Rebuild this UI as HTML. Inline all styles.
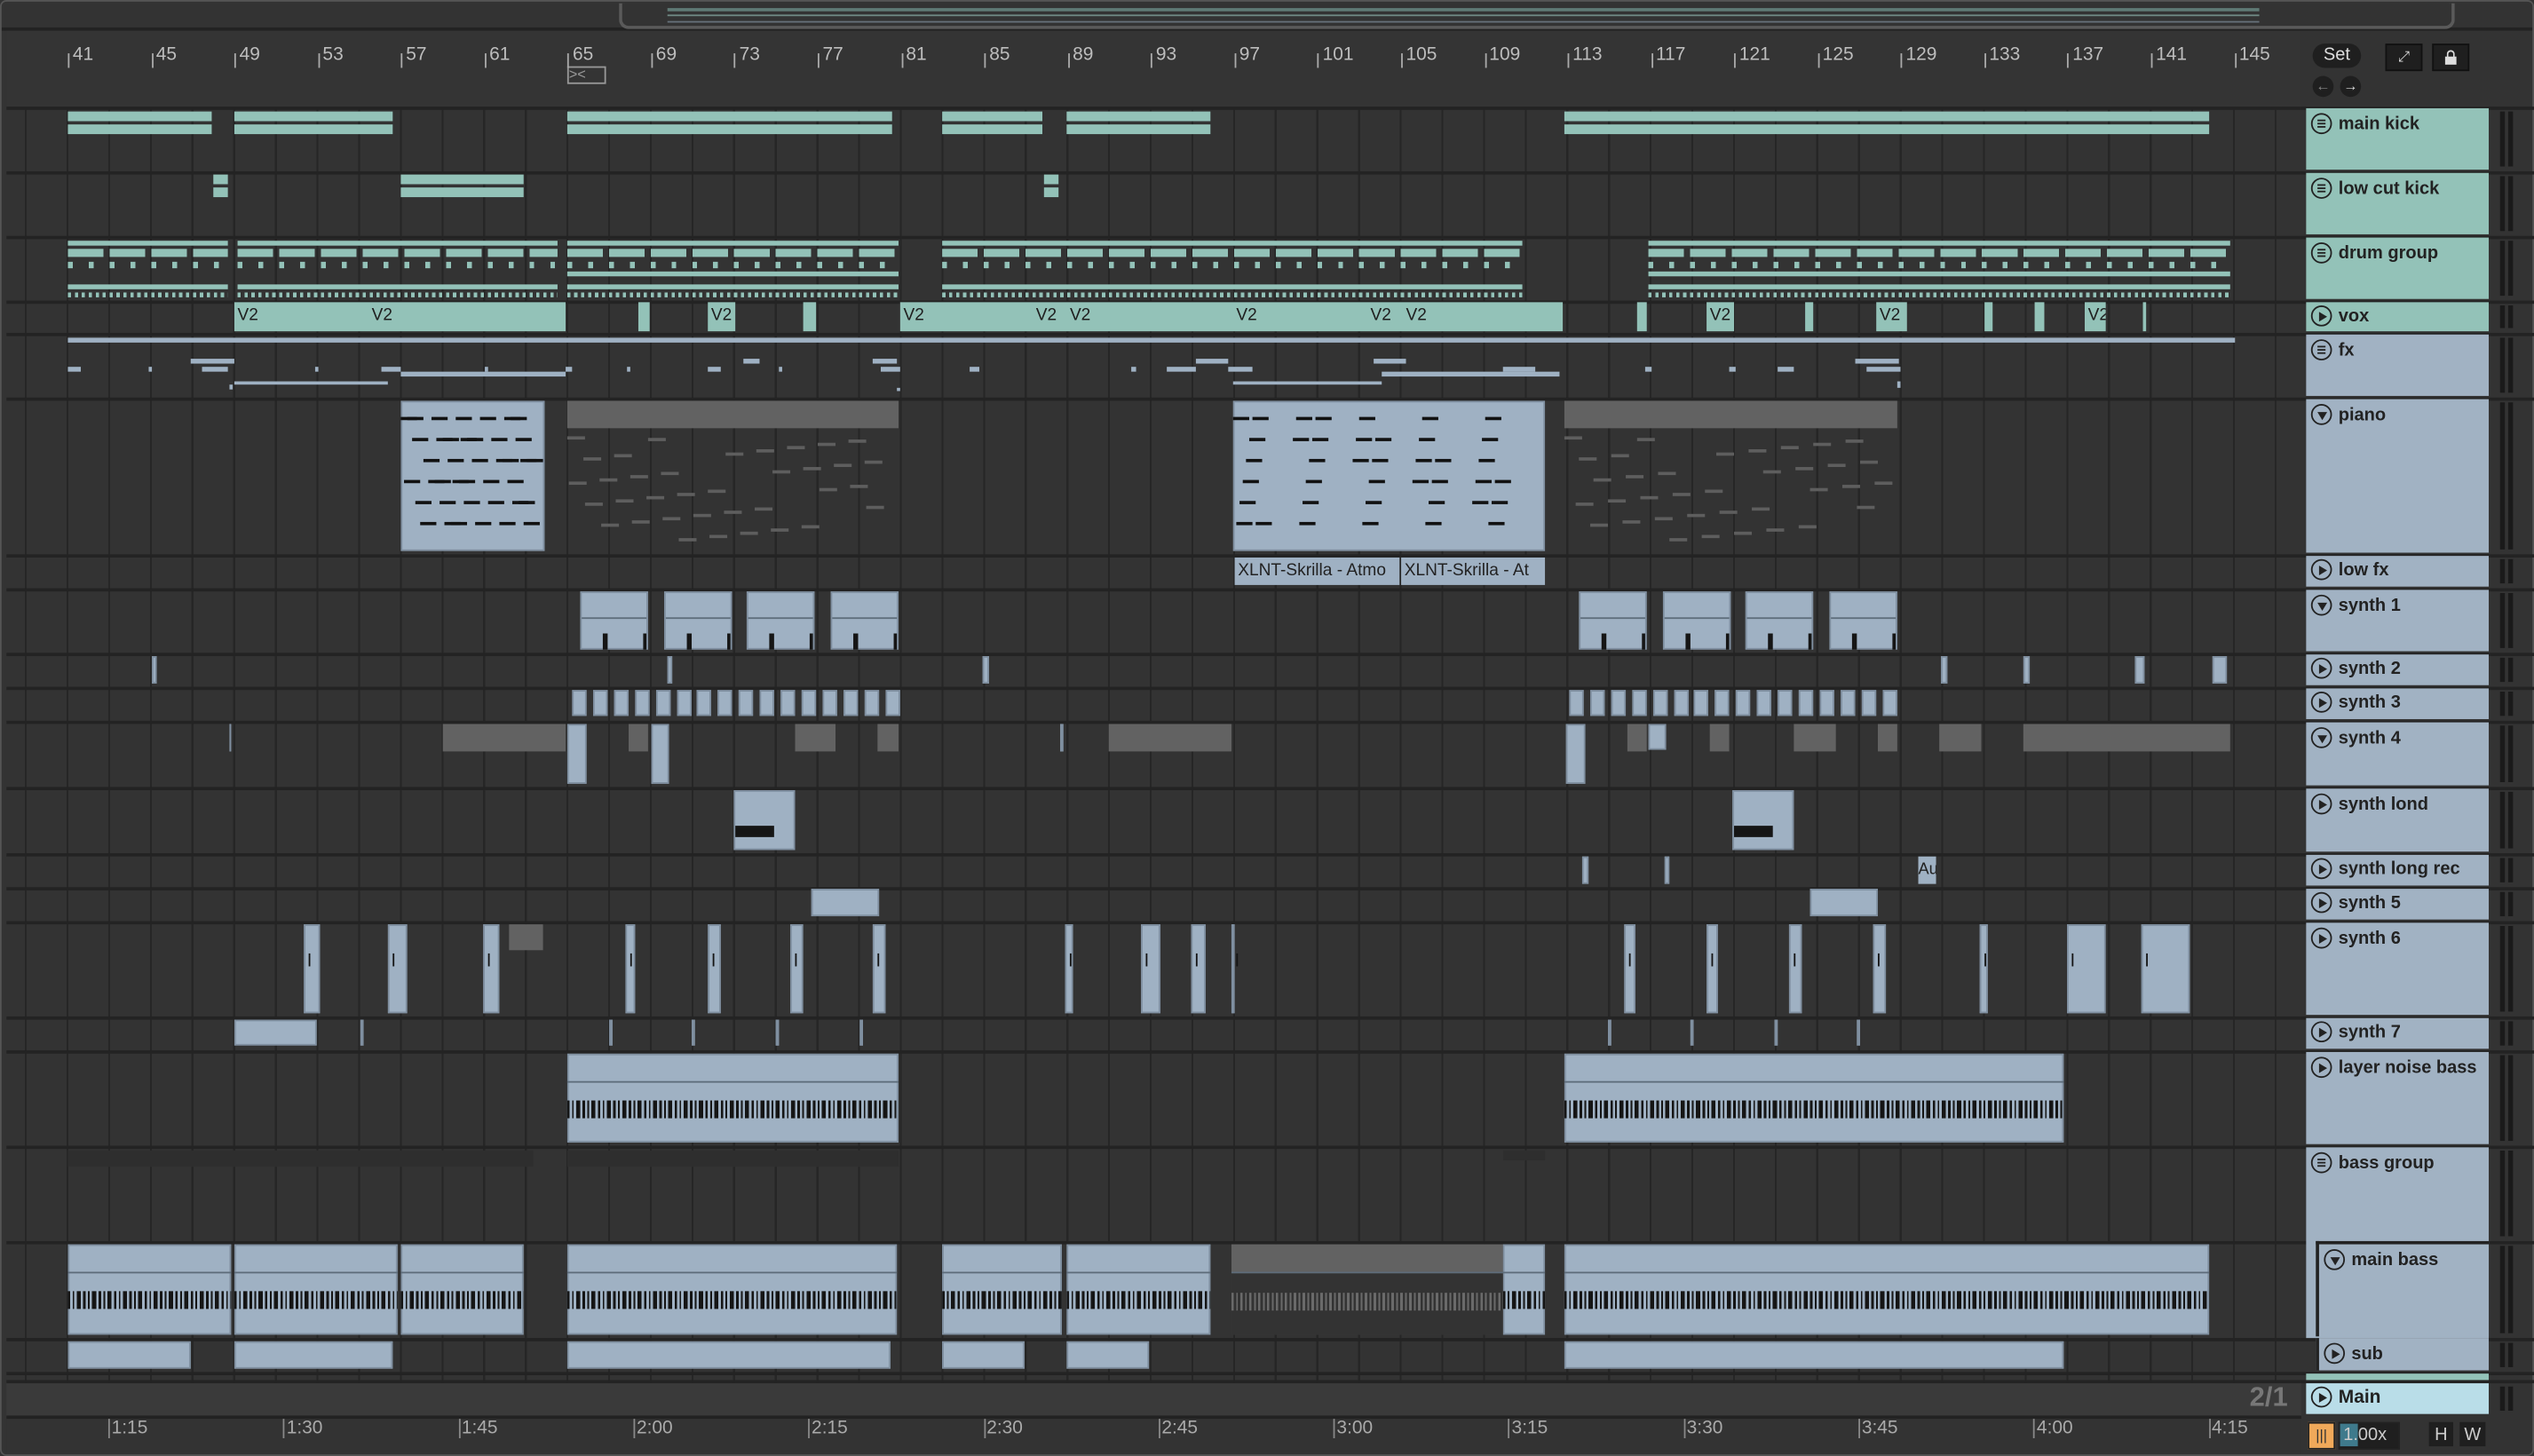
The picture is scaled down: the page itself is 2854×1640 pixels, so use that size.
<!DOCTYPE html>
<html><head><meta charset="utf-8"><style>
html,body{margin:0;padding:0;background:#1f1f1f;overflow:hidden}
#root{position:absolute;left:0;top:0;width:1568px;height:901px;transform-origin:0 0;transform:scale(1.82015,1.82020);background:#333;font-family:"Liberation Sans",sans-serif;overflow:hidden}
.a{position:absolute}
.grid{position:absolute;left:4px;top:67px;width:1420px;height:809px;background-image:repeating-linear-gradient(90deg,transparent 0,transparent 11.4px,#262626 11.4px,#262626 12.6px,transparent 12.6px,transparent 25.78px)}
.sep{position:absolute;left:4px;width:1420px;height:2px;background:#232323}
.hd{position:absolute;left:1427px;width:113px;color:#222;font-size:11px;font-weight:bold;font-family:"Liberation Sans",sans-serif;white-space:nowrap}
.hd span{position:absolute;left:20px;top:4px}
.ic{position:absolute;left:3px;top:3px;width:11px;height:11px;border:1.3px solid #222;border-radius:50%}
.ic.ig:before{content:"";position:absolute;left:3px;top:3px;width:5px;height:5px;border-top:1px solid #222;border-bottom:1px solid #222;box-sizing:border-box}
.ic.ig:after{content:"";position:absolute;left:3px;top:5px;width:5px;height:1px;background:#222}
.ic.ip:before{content:"";position:absolute;left:4px;top:2.5px;border-left:5px solid #222;border-top:3px solid transparent;border-bottom:3px solid transparent}
.ic.id:before{content:"";position:absolute;left:2.5px;top:4px;border-top:5px solid #222;border-left:3px solid transparent;border-right:3px solid transparent}
.mt{position:absolute;left:1547px;width:8px}
.mt:before,.mt:after{content:"";position:absolute;top:2px;bottom:2px;width:3px;background:#1a1a1a}
.mt:before{left:0}.mt:after{left:5px}
.t{position:absolute;background:#93c2b8}
.b{position:absolute;background:#9fb1c3;box-shadow:inset 0 0 0 1px #7f8fa0}
.g{position:absolute;background:#626262}
.rl{position:absolute;top:28px;color:#bdbdbd;font-size:11.5px}
.tl{position:absolute;top:878px;color:#aaa;font-size:11.5px}
.v{position:absolute;top:189px;font-size:10.5px;color:#1e1e1e}
</style></head><body><div id="root">
<div class="a" style="left:0;top:0;width:1568px;height:17px;background:#333;border-bottom:2px solid #222"></div>
<div class="a" style="left:383px;top:2px;width:1132px;height:14px;border:2px solid #5a5a5a;border-top:none;border-radius:0 0 6px 6px"></div>
<div class="a" style="left:413px;top:5px;width:985px;height:2px;background:#5f7a75"></div>
<div class="a" style="left:413px;top:9px;width:985px;height:1px;background:#6f8984"></div>
<div class="a" style="left:413px;top:13px;width:985px;height:1px;background:#66707a"></div>
<div class="a" style="left:4px;top:19px;width:1420px;height:48px;background:#343434"></div>
<div id="ruler"></div>
<div class="a" style="left:351px;top:41px;width:24px;height:11px;border:1px solid #999;box-sizing:border-box"></div>
<div class="a" style="left:352px;top:42px;font-size:9px;color:#999;line-height:9px">&gt;&lt;</div>
<div class="grid"></div>
<div id="seps"></div>
<div id="clips"></div>
<div class="a" style="left:4px;top:855px;width:1420px;height:21px;background:#3a3a3a"></div>
<div class="a" style="left:1392px;top:855px;color:#777;font-size:17px;font-weight:bold">2/1</div>
<div class="a" style="left:4px;top:876px;width:1420px;height:25px;background:#333;border-top:2px solid #222"></div>
<div id="tl"></div>
<div class="a" style="left:1424px;top:19px;width:144px;height:48px;background:#333"></div>
<div class="a" style="left:1431px;top:27px;width:30px;height:15px;background:#1f1f1f;border-radius:8px;color:#ddd;font-size:11px;text-align:center;line-height:15px">Set</div>
<div class="a" style="left:1476px;top:27px;width:21px;height:15px;background:#1f1f1f;border:1px solid #111;color:#ddd;font-size:9px;text-align:center;line-height:15px">⤢</div>
<div class="a" style="left:1505px;top:27px;width:21px;height:15px;background:#1f1f1f;border:1px solid #111"><div class="a" style="left:7px;top:7px;width:7px;height:5px;background:#ddd"></div><div class="a" style="left:8px;top:3px;width:3px;height:4px;border:1px solid #ddd;border-bottom:none;border-radius:3px 3px 0 0"></div></div>
<div class="a" style="left:1431px;top:47px;width:13px;height:13px;background:#1f1f1f;border-radius:50%;color:#888;font-size:9px;text-align:center;line-height:13px">←</div>
<div class="a" style="left:1448px;top:47px;width:13px;height:13px;background:#1f1f1f;border-radius:50%;color:#ddd;font-size:9px;text-align:center;line-height:13px">→</div>
<div id="hdrs"></div>
<div class="a" style="left:1428px;top:880px;width:15px;height:15px;background:#f0a95a;border:1px solid #222;color:#333;font-size:9px;text-align:center;line-height:15px">|||</div>
<div class="a" style="left:1447px;top:880px;width:36px;height:15px;background:#1f1f1f;border:1px solid #222"></div>
<div class="a" style="left:1448px;top:881px;width:11px;height:14px;background:#3f7a8c"></div>
<div class="a" style="left:1450px;top:880px;color:#ccc;font-size:11px;line-height:16px">1.00x</div>
<div class="a" style="left:1503px;top:880px;width:15px;height:15px;background:#1f1f1f;color:#ccc;font-size:11px;text-align:center;line-height:16px">H</div>
<div class="a" style="left:1522px;top:880px;width:16px;height:15px;background:#1f1f1f;color:#ccc;font-size:11px;text-align:center;line-height:16px">W</div>
<div class="a" style="left:0;top:0;width:1566px;height:899px;border:1px solid #555;border-radius:4px;pointer-events:none"></div>
<div class="a" style="left:764px;top:344px;width:102px;height:18px;background:#9fb1c3;color:#222;font-size:10.5px;line-height:18px;overflow:hidden;white-space:nowrap;padding-left:2px;box-sizing:border-box">XLNT-Skrilla - Atmo</div>
<div class="a" style="left:867px;top:344px;width:89px;height:18px;background:#9fb1c3;color:#222;font-size:10.5px;line-height:18px;overflow:hidden;white-space:nowrap;padding-left:2px;box-sizing:border-box">XLNT-Skrilla - At</div>
<div id="v2"></div>
<div class="a" style="left:1187px;top:530px;width:11px;height:17px;background:#9fb1c3;color:#222;font-size:10px;line-height:17px;overflow:hidden">Au</div>
<div class="hd" style="top:67px;height:38px;background:#93c2b8"><div class="ic ig"></div><span>main kick</span></div>
<div class="hd" style="top:107px;height:38px;background:#93c2b8"><div class="ic ig"></div><span>low cut kick</span></div>
<div class="hd" style="top:147px;height:38px;background:#93c2b8"><div class="ic ig"></div><span>drum group</span></div>
<div class="hd" style="top:187px;height:18px;background:#93c2b8"><div class="ic ip" style="top:2px"></div><span style="top:3px">vox</span></div>
<div class="hd" style="top:207px;height:38px;background:#a1b2c3"><div class="ic ig"></div><span>fx</span></div>
<div class="hd" style="top:247px;height:95px;background:#a1b2c3"><div class="ic id"></div><span>piano</span></div>
<div class="hd" style="top:344px;height:19px;background:#a1b2c3"><div class="ic ip" style="top:2px"></div><span style="top:3px">low fx</span></div>
<div class="hd" style="top:365px;height:38px;background:#a1b2c3"><div class="ic id"></div><span>synth 1</span></div>
<div class="hd" style="top:405px;height:19px;background:#a1b2c3"><div class="ic ip" style="top:2px"></div><span style="top:3px">synth 2</span></div>
<div class="hd" style="top:426px;height:19px;background:#a1b2c3"><div class="ic ip" style="top:2px"></div><span style="top:3px">synth 3</span></div>
<div class="hd" style="top:447px;height:39px;background:#a1b2c3"><div class="ic id"></div><span>synth 4</span></div>
<div class="hd" style="top:488px;height:39px;background:#a1b2c3"><div class="ic ip"></div><span>synth lond</span></div>
<div class="hd" style="top:529px;height:19px;background:#a1b2c3"><div class="ic ip" style="top:2px"></div><span style="top:3px">synth long rec</span></div>
<div class="hd" style="top:550px;height:19px;background:#a1b2c3"><div class="ic ip" style="top:2px"></div><span style="top:3px">synth 5</span></div>
<div class="hd" style="top:571px;height:57px;background:#a1b2c3"><div class="ic ip"></div><span>synth 6</span></div>
<div class="hd" style="top:630px;height:19px;background:#a1b2c3"><div class="ic ip" style="top:2px"></div><span style="top:3px">synth 7</span></div>
<div class="hd" style="top:651px;height:57px;background:#a1b2c3"><div class="ic ip"></div><span>layer noise bass</span></div>
<div class="hd" style="top:710px;height:118px;background:#a1b2c3"><div class="ic ig"></div><span>bass group</span></div>
<div class="hd" style="left:1433px;width:107px;top:768px;height:59px;background:#a1b2c3;border-left:2px solid #222;border-top:2px solid #222;box-sizing:border-box"><div class="ic id"></div><span>main bass</span></div>
<div class="hd" style="left:1433px;width:107px;top:828px;height:20px;background:#a1b2c3;border-left:2px solid #222;box-sizing:border-box"><div class="ic ip" style="top:3px"></div><span style="top:4px">sub</span></div>
<div class="hd" style="top:850px;height:4px;background:#93c2b8"></div>
<div class="hd" style="top:856px;height:19px;background:#b9dde8;font-size:11.5px"><div class="ic ip" style="top:2px"></div><span style="top:3px">Main</span></div>
<script>
var R=document.getElementById('root');
function el(c,x1,x2,y1,y2,st){var d=document.createElement('div');d.className=c;d.style.cssText='left:'+x1+'px;width:'+(x2-x1)+'px;top:'+y1+'px;height:'+(y2-y1)+'px;'+(st||'');R.insertBefore(d,document.getElementById('v2'));return d;}
for(var i=0;i<27;i++){var b=41+i*4,x=42+(b-41)*12.89;
el('a',x,x+1,33,42,'background:#aaa');var s=document.createElement('div');s.className='rl';s.style.left=(x+3)+'px';s.textContent=b;R.insertBefore(s,document.getElementById('ruler'));}
var tls=['1:15','1:30','1:45','2:00','2:15','2:30','2:45','3:00','3:15','3:30','3:45','4:00','4:15'];
tls.forEach(function(t,i){var x=67+i*108.3;el('a',x,x+1,878,890,'background:#888');var s=document.createElement('div');s.className='tl';s.style.left=(x+2)+'px';s.textContent=t;R.insertBefore(s,document.getElementById('tl'));});
[66,106,146,186,206,246,343,364,404,425,446,487,528,549,570,629,650,709,768,828,849,854].forEach(function(y){el('sep',4,1424,y,y+2);el('a',1424,1568,y,y+2,'background:#232323')});
[[67,105],[107,145],[147,185],[187,205],[207,245],[247,342],[344,363],[365,403],[405,424],[426,445],[447,486],[488,527],[529,548],[550,569],[571,628],[630,649],[651,708],[710,767],[769,827],[829,848],[856,875]].forEach(function(r){el('mt',1547,1555,r[0],r[1])});
function T(x1,x2,y1,y2){el('t',x1,x2,y1,y2)}
function B(x1,x2,y1,y2){return el('b',x1,x2,y1,y2)}
function G(x1,x2,y1,y2){el('g',x1,x2,y1,y2)}
[[42,131],[145,243],[351,552],[583,645],[660,749],[968,1367]].forEach(function(c){T(c[0],c[1],69,75);T(c[0],c[1],77,83)});
[[132,141],[248,324],[646,655]].forEach(function(c){T(c[0],c[1],108,114);T(c[0],c[1],116,122)});
[[42,141],[147,345],[351,556],[583,942],[1020,1380]].forEach(function(c){
T(c[0],c[1],149,152);el('a',c[0],c[1],154,159,'background:repeating-linear-gradient(90deg,#93c2b8 0,#93c2b8 22px,transparent 22px,transparent 25.8px)');
el('a',c[0],c[1],162,166,'background:repeating-linear-gradient(90deg,#93c2b8 0,#93c2b8 3px,transparent 3px,transparent 12.9px)');
T(c[0],c[1],176,179);el('a',c[0],c[1],181,184,'background:repeating-linear-gradient(90deg,#93c2b8 0,#93c2b8 2px,transparent 2px,transparent 4.3px)');});
[[351,556],[1020,1380]].forEach(function(c){T(c[0],c[1],168,171)});
[[145,350],[395,402],[438,455],[497,505],[557,967],[1013,1019],[1056,1073],[1117,1122],[1161,1180],[1228,1233],[1259,1265],[1290,1303],[1326,1328]].forEach(function(c){T(c[0],c[1],187,205)});
el('a',42,1383,209,212,'background:#9fb1c3');
[[42,50,227,230],[92,94,227,230],[118,145,222,225],[125,141,227,230],[142,144,238,241],[145,240,236,238],[195,197,227,230],[236,248,227,230],[248,350,230,233],[300,302,227,230],[350,354,227,230],[388,390,227,230],[438,446,227,230],[460,470,222,225],[482,484,227,230],[540,555,222,225],[545,557,227,230],[555,557,240,242],[600,606,227,230],[700,703,227,230],[722,740,227,230],[740,760,222,225],[760,775,227,230],[763,855,236,238],[850,870,222,225],[855,965,230,233],[930,950,227,230],[1018,1022,227,230],[1070,1074,227,230],[1100,1110,227,230],[1148,1175,222,225],[1155,1176,227,230],[1174,1176,236,240]].forEach(function(c){el('a',c[0],c[1],c[2],c[3],'background:#9fb1c3')});
function notesBlack(x1,x2){var d=B(x1,x2,248,341);for(var i=0;i<40;i++){var nx=x1+((i*37)%(x2-x1-10)),ny=258+((i*13)%78);var n=document.createElement('div');n.className='a';n.style.cssText='left:'+(nx-x1)+'px;top:'+(ny-248)+'px;width:10px;height:2px;background:#111';d.appendChild(n);}}
notesBlack(248,337);notesBlack(763,956);
function notesGray(x1,x2){G(x1,x2,248,265);for(var i=0;i<36;i++){var nx=x1+((i*29)%(x2-x1-12)),ny=270+((i*11)%64);el('a',nx,nx+11,ny,ny+2,'background:#5e5e5e')}}
notesGray(351,556);notesGray(968,1174);
[359,411,462,514,977,1029,1080,1132].forEach(function(x){var d=B(x,x+42,366,402);d.style.backgroundImage='linear-gradient(#5d6c7a,#5d6c7a)';d.style.backgroundSize='100% 1px';d.style.backgroundPosition='0 16px';d.style.backgroundRepeat='no-repeat';el('a',x+14,x+17,392,402,'background:#151515');el('a',x+39,x+41,392,402,'background:#151515')});
[[94,97],[413,416],[608,612],[1201,1205],[1252,1256],[1321,1327],[1369,1378]].forEach(function(c){B(c[0],c[1],406,423)});
[[354,556],[971,1175]].forEach(function(c){for(var x=c[0];x<c[1]-6;x+=12.9){B(x,x+9,427,443)}});
[[274,350],[389,401],[492,517],[543,556],[686,762],[1007,1019],[1058,1070],[1110,1136],[1162,1174],[1200,1226],[1252,1380]].forEach(function(c){G(c[0],c[1],448,465)});
B(351,363,448,485);B(403,414,448,485);B(969,981,448,485);B(1020,1031,448,464);B(142,143,448,465);B(656,658,448,465);
[454,1072].forEach(function(x){B(x,x+38,489,526);el('a',x+1,x+25,511,518,'background:#151515')});
B(979,983,530,547);B(1030,1033,530,547);
B(502,544,550,567);B(1120,1162,550,567);
[[188,198],[240,252],[299,309],[387,393],[438,446],[489,497],[540,548],[659,664],[706,718],[737,746],[762,764],[1005,1012],[1056,1063],[1107,1115],[1159,1167],[1225,1230],[1279,1303],[1325,1355]].forEach(function(c){B(c[0],c[1],572,627);el('a',c[0]+3,c[0]+4,590,598,'background:#151515')});
G(315,336,572,588);
B(145,196,631,647);[223,377,428,480,532,995,1046,1098,1149].forEach(function(x){B(x,x+2,631,647)});
el('a',42,330,712,722,'background:#2e2e2e');el('a',351,556,712,722,'background:#2e2e2e');el('a',930,956,712,718,'background:#2e2e2e');
function bar(x1,x2,y1,y2,bc,gray){var d=el(gray?'g':'b',x1,x2,y1,y2);var h=y2-y1;var bcy=Math.round(h*0.52);
var z=document.createElement('div');z.className='a';z.style.cssText='left:0;right:0;top:'+bcy+'px;height:'+Math.round(h*0.2)+'px;background:repeating-linear-gradient(90deg,'+bc+' 0,'+bc+' 1.5px,transparent 1.5px,transparent 3px,'+bc+' 3px,'+bc+' 4px,transparent 4px,transparent 5.5px,'+bc+' 5.5px,'+bc+' 8px,transparent 8px,transparent 9.5px)';d.appendChild(z);
var ln=document.createElement('div');ln.className='a';ln.style.cssText='left:0;right:0;top:'+Math.round(h*0.3)+'px;height:1px;background:#5d6c7a';d.appendChild(ln);}
[[351,556],[968,1277]].forEach(function(c){bar(c[0],c[1],652,707,'#151515')});
[[42,143],[145,246],[248,324],[351,555],[583,657],[660,749],[968,1367],[930,956]].forEach(function(c){bar(c[0],c[1],770,826,'#151515')});
bar(762,930,770,826,'#777',true);el('a',762,930,788,826,'background:#333');
el('a',762,930,800,811,'background:repeating-linear-gradient(90deg,#6a6a6a 0,#6a6a6a 1.5px,transparent 1.5px,transparent 3px,#6a6a6a 3px,#6a6a6a 4px,transparent 4px,transparent 5.5px)');
[[42,118],[145,243],[351,551],[583,634],[660,711],[968,1277]].forEach(function(c){B(c[0],c[1],830,847)});
</script>
<div class="v" style="left:147px">V2</div>
<div class="v" style="left:230px">V2</div>
<div class="v" style="left:440px">V2</div>
<div class="v" style="left:559px">V2</div>
<div class="v" style="left:641px">V2</div>
<div class="v" style="left:662px">V2</div>
<div class="v" style="left:765px">V2</div>
<div class="v" style="left:848px">V2</div>
<div class="v" style="left:870px">V2</div>
<div class="v" style="left:1058px">V2</div>
<div class="v" style="left:1163px">V2</div>
<div class="v" style="left:1292px;width:11px;overflow:hidden">V2</div>
</div></body></html>
